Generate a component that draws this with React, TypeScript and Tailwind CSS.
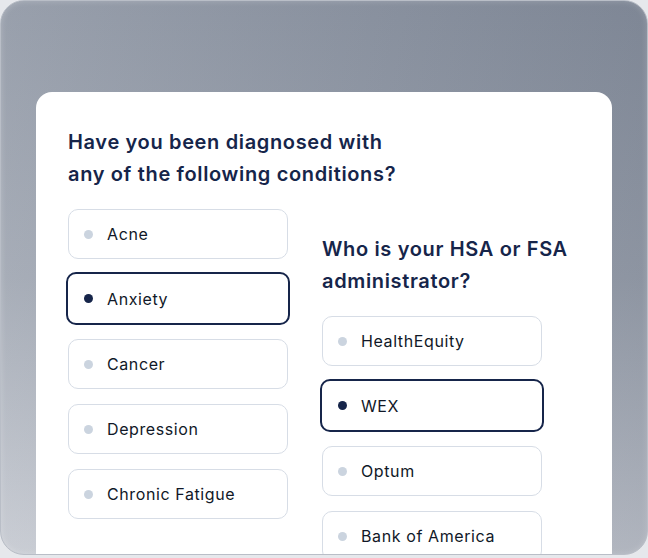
import React from 'react';

type Option = { label: string; selected?: boolean };

const conditions: Option[] = [
  { label: 'Acne' },
  { label: 'Anxiety', selected: true },
  { label: 'Cancer' },
  { label: 'Depression' },
  { label: 'Chronic Fatigue' },
];

const administrators: Option[] = [
  { label: 'HealthEquity' },
  { label: 'WEX', selected: true },
  { label: 'Optum' },
  { label: 'Bank of America' },
];

function OptionRow({ option }: { option: Option }) {
  if (option.selected) {
    return (
      <div className="-mx-[2px] -mt-[2px] -mb-[1px] flex h-[53px] items-center gap-[14px] rounded-[10px] border-2 border-[#16254a] bg-white pl-[16px]">
        <span className="h-[9px] w-[9px] rounded-full bg-[#16254a]" />
        <span className="text-[16px] tracking-[0.6px] text-[#111827]">{option.label}</span>
      </div>
    );
  }
  return (
    <div className="flex h-[50px] items-center gap-[14px] rounded-[10px] border border-[#d7dde6] bg-white pl-[15px]">
      <span className="h-[9px] w-[9px] rounded-full bg-[#cbd4df]" />
      <span className="text-[16px] tracking-[0.6px] text-[#111827]">{option.label}</span>
    </div>
  );
}

function Question({ title, options }: { title: React.ReactNode; options: Option[] }) {
  return (
    <div className="flex w-[220px] flex-col">
      <h2 className="w-[360px] text-[20px] font-semibold leading-[32px] tracking-[0.65px] text-[#16254a]">{title}</h2>
      <div className="mt-[19px] flex flex-col gap-[15px]">
        {options.map((o) => (
          <OptionRow key={o.label} option={o} />
        ))}
      </div>
    </div>
  );
}

export default function App() {
  return (
    <div className="h-[558px] w-[648px] overflow-hidden bg-[#e6e8ec]" style={{ fontFamily: 'Inter, "Open Sans", sans-serif' }}>
      <div className="h-[555px] overflow-hidden rounded-[24px] border border-[#b9bec7] bg-gradient-to-b from-[#8a92a0] via-[#9ba2ae] to-[#c3c7cf] shadow-[inset_0_0_6px_rgba(255,255,255,0.25)]">
        <div className="h-full bg-gradient-to-r from-[rgba(255,255,255,0.12)] to-[rgba(40,50,70,0.12)] px-[35px] pt-[91px]">
          <div className="h-full rounded-t-[16px] bg-white px-[32px] pt-[34px]">
            <div className="flex gap-[34px]">
              <Question
                title={<>Have you been diagnosed with<br />any of the following conditions?</>}
                options={conditions}
              />
              <div className="pt-[107px]">
                <Question
                  title={<>Who is your HSA or FSA<br />administrator?</>}
                  options={administrators}
                />
              </div>
            </div>
          </div>
        </div>
      </div>
    </div>
  );
}
